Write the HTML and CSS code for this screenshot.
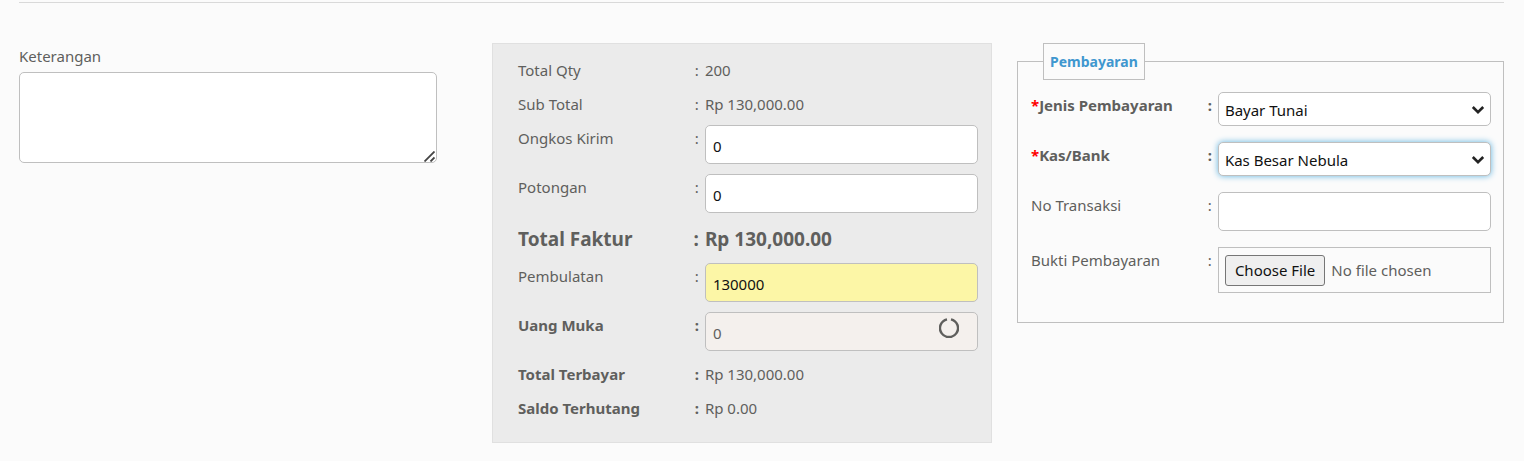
FILE: index.html
```html
<!DOCTYPE html>
<html lang="id">
<head>
  <meta charset="UTF-8" />
  <title>Faktur - Pembayaran</title>
  <link rel="stylesheet" href="styles.css">
</head>
<body>

  <form class="invoice-footer">

    <!-- Keterangan -->
    <div class="notes">
      <label for="keterangan">Keterangan</label>
      <div class="with-icon">
        <textarea id="keterangan"></textarea>
        <svg class="grip" viewBox="0 0 11 11" aria-hidden="true">
          <path d="M.5 10.5l10-10M6.5 10.5l4-4" fill="none" stroke="#444" stroke-width="1.8" />
        </svg>
      </div>
    </div>

    <!-- Total -->
    <div class="totals">
      <div class="row">
        <div class="label"><span>Total Qty</span><span>:</span></div>
        <div class="value">200</div>
      </div>
      <div class="row">
        <div class="label"><span>Sub Total</span><span>:</span></div>
        <div class="value">Rp 130,000.00</div>
      </div>
      <div class="row">
        <label class="label" for="ongkos"><span>Ongkos Kirim</span><span>:</span></label>
        <input type="text" id="ongkos" value="0">
      </div>
      <div class="row">
        <label class="label" for="potongan"><span>Potongan</span><span>:</span></label>
        <input type="text" id="potongan" value="0">
      </div>
      <div class="row grand-total">
        <div class="label"><span>Total Faktur</span><span>:</span></div>
        <div class="value">Rp 130,000.00</div>
      </div>
      <div class="row">
        <label class="label" for="pembulatan"><span>Pembulatan</span><span>:</span></label>
        <input type="text" id="pembulatan" class="highlight" value="130000">
      </div>
      <div class="row">
        <label class="label bold" for="uangMuka"><span>Uang Muka</span><span>:</span></label>
        <div class="with-icon">
          <input type="text" id="uangMuka" value="0" disabled>
          <svg class="spinner" viewBox="0 0 20 20" aria-hidden="true">
            <path d="M12 1.3A9 9 0 1 1 8 1.3" fill="none" stroke="#5f5f5d" stroke-width="2.4" />
          </svg>
        </div>
      </div>
      <div class="row">
        <div class="label bold"><span>Total Terbayar</span><span>:</span></div>
        <div class="value">Rp 130,000.00</div>
      </div>
      <div class="row">
        <div class="label bold"><span>Saldo Terhutang</span><span>:</span></div>
        <div class="value">Rp 0.00</div>
      </div>
    </div>

    <!-- Pembayaran -->
    <fieldset class="payment">
      <legend>Pembayaran</legend>
      <div class="row">
        <label class="label bold" for="jenis"><span><span class="required">*</span>Jenis Pembayaran</span><span>:</span></label>
        <div class="with-icon">
          <select id="jenis">
            <option>Bayar Tunai</option>
          </select>
          <svg class="arrow" viewBox="0 0 14 10" aria-hidden="true">
            <path d="M1.8 2L7 7.2L12.2 2" fill="none" stroke="#222" stroke-width="2.6" />
          </svg>
        </div>
      </div>
      <div class="row">
        <label class="label bold" for="kas"><span><span class="required">*</span>Kas/Bank</span><span>:</span></label>
        <div class="with-icon">
          <select id="kas" class="active">
            <option>Kas Besar Nebula</option>
          </select>
          <svg class="arrow" viewBox="0 0 14 10" aria-hidden="true">
            <path d="M1.8 2L7 7.2L12.2 2" fill="none" stroke="#222" stroke-width="2.6" />
          </svg>
        </div>
      </div>
      <div class="row">
        <label class="label" for="noTransaksi"><span>No Transaksi</span><span>:</span></label>
        <input type="text" id="noTransaksi">
      </div>
      <div class="row">
        <label class="label" for="bukti"><span>Bukti Pembayaran</span><span>:</span></label>
        <input type="file" id="bukti">
      </div>
    </fieldset>

  </form>

</body>
</html>
```
FILE: styles.css
```css
* {
  box-sizing: border-box;
}

body {
  margin: 2px 20px 0 19px;
  background: #fbfbfb;
  color: #5f5f5d;
  font-family: "Segoe UI", "Noto Sans", "Open Sans", sans-serif;
  font-size: 15px;
  line-height: 21px;
}

.invoice-footer {
  display: grid;
  grid-template-columns: minmax(0, 473fr) minmax(0, 500fr) minmax(0, 512fr);
  align-items: start;
  border-top: 1px solid #d9d9d9;
  padding: 40px 0 18px;
}

/* Controls */
input, select, textarea {
  display: block;
  width: 100%;
  font: inherit;
  color: #111;
  background: #fff;
  border: 1px solid #bfbfbf;
  border-radius: 5px;
}

input[type="text"] {
  height: 39px;
  padding: 2px 7px 0;
}

input[type="text"]:disabled {
  background: #f4f0ed;
  color: #5f5f5d;
}

input.highlight {
  background: #fcf6a6;
}

select {
  height: 34px;
  padding: 2px 24px 0 6px;
  appearance: none;
}

select.active {
  box-shadow: 0 0 6px #5fb3e0;
}

input[type="file"] {
  height: 46px;
  padding: 7px 6px;
  color: #5f5f5d;
  background: none;
  border-radius: 0;
}

input[type="file"]::file-selector-button {
  height: 31px;
  margin-right: 6px;
  padding: 0 9px;
  font: inherit;
  color: #111;
  background: #efefef;
  border: 1px solid #767676;
  border-radius: 3px;
}

/* Icons over the controls */
.with-icon {
  position: relative;
}

.with-icon svg {
  position: absolute;
  pointer-events: none;
}

.spinner {
  top: 6px;
  right: 19px;
  width: 20px;
  height: 20px;
}

.arrow {
  top: 13px;
  right: 6px;
  width: 14px;
  height: 10px;
}

.grip {
  right: 2px;
  bottom: 1px;
  width: 11px;
  height: 11px;
}

/* Keterangan */
.notes {
  padding: 3px 55px 0 0;
}

.notes label {
  display: block;
  margin-bottom: 5px;
}

.notes textarea {
  height: 91px;
  resize: none;
}

/* Rows */
.row {
  display: grid;
  grid-template-columns: minmax(0, 13fr) minmax(0, 19fr);
  align-items: start;
  margin-bottom: 10px;
}

.label {
  display: flex;
  justify-content: space-between;
  padding: 3px 6px 0 0;
}

.value {
  padding-top: 3px;
}

.bold {
  font-weight: bold;
}

.required {
  color: #f00;
}

/* Total */
.totals {
  background: #ebebeb;
  border: 1px solid #e0e0e0;
  padding: 13px 13px 13px 25px;
}

.grand-total {
  font-size: 19px;
  font-weight: bold;
  line-height: 27px;
}

/* Pembayaran */
.payment {
  min-width: 0;
  margin: 0 0 0 25px;
  padding: 12px 12px 13px 13px;
  border: 1px solid #bfbfbf;
}

.payment legend {
  margin-left: 12px;
  padding: 7px 6px;
  border: 1px solid #bfbfbf;
  color: #3f97cf;
  font-size: 14px;
  font-weight: bold;
}

.payment .row {
  margin-bottom: 16px;
}
```
